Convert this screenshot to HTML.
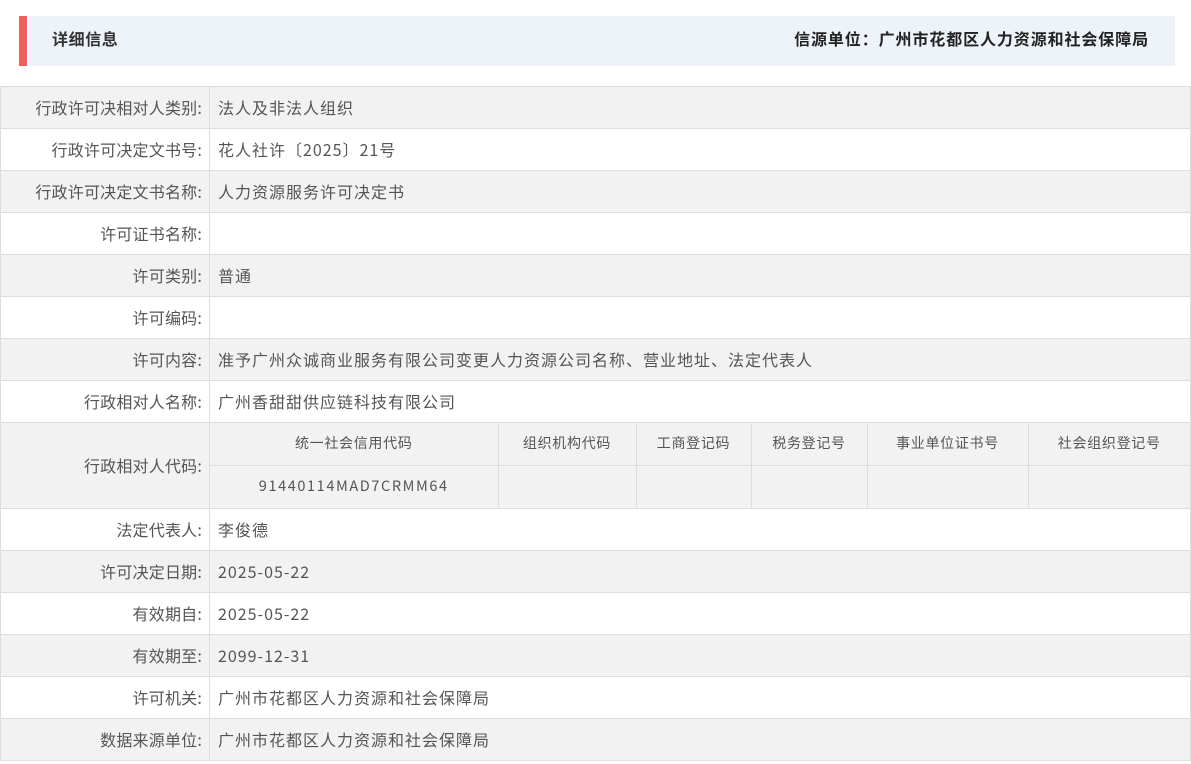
<!DOCTYPE html>
<html><head><meta charset="utf-8"><style>
*{margin:0;padding:0;box-sizing:border-box}
body{width:1191px;height:764px;background:#fff;font-family:"Liberation Sans","Noto Sans CJK SC",sans-serif;color:#333;overflow:hidden;position:relative}
.hd{position:absolute;left:19px;top:16px;width:1156px;height:50px;background:#eef2f9;border-left:8px solid #f55e5e}
.hd .t{position:absolute;left:25px;top:0;line-height:50px;font-size:16px;font-weight:bold;color:#333;letter-spacing:0.6px}
.hd .s{position:absolute;right:26px;top:0;line-height:50px;font-size:16px;font-weight:bold;color:#222;letter-spacing:0.9px}
table.m{position:absolute;left:0;top:86px;width:1191px;border-collapse:collapse;font-size:16px;letter-spacing:1px;font-family:"Noto Sans CJK SC",sans-serif}
table.m td{border:1px solid #ddd;height:42px;padding:0 8px 2px;color:#555;line-height:20px}
table.m td.l{width:209px;text-align:right;padding-right:7px;letter-spacing:0.2px}
table.m tr:nth-child(odd) td{background:#f2f2f2}
table.m td.n{padding:0}
table.i{width:100%;border-collapse:collapse;font-size:14px;letter-spacing:0.7px}
table.i td{border:1px solid #ddd;height:42px;text-align:center;background:#f2f2f2;padding:0 0 2px;color:#555}
table.i tr td:first-child{border-left:none}
table.i tr td:last-child{border-right:none}
table.i tr:first-child td{border-top:none}
table.i tr:last-child td{border-bottom:none}
.d{letter-spacing:1px}
</style></head><body>
<div class="hd"><div class="t">详细信息</div><div class="s">信源单位：广州市花都区人力资源和社会保障局</div></div>
<table class="m">
<tr><td class="l">行政许可决相对人类别:</td><td>法人及非法人组织</td></tr>
<tr><td class="l">行政许可决定文书号:</td><td>花人社许〔2025〕21号</td></tr>
<tr><td class="l">行政许可决定文书名称:</td><td>人力资源服务许可决定书</td></tr>
<tr><td class="l">许可证书名称:</td><td></td></tr>
<tr><td class="l">许可类别:</td><td>普通</td></tr>
<tr><td class="l">许可编码:</td><td></td></tr>
<tr><td class="l">许可内容:</td><td>准予广州众诚商业服务有限公司变更人力资源公司名称、营业地址、法定代表人</td></tr>
<tr><td class="l">行政相对人名称:</td><td>广州香甜甜供应链科技有限公司</td></tr>
<tr><td class="l" style="height:86px">行政相对人代码:</td><td class="n">
<table class="i"><tr><td style="width:288px">统一社会信用代码</td><td style="width:138px">组织机构代码</td><td style="width:115px">工商登记码</td><td style="width:116px">税务登记号</td><td style="width:161px">事业单位证书号</td><td>社会组织登记号</td></tr>
<tr><td style="font-size:14.5px;letter-spacing:1.6px">91440114MAD7CRMM64</td><td></td><td></td><td></td><td></td><td></td></tr></table>
</td></tr>
<tr><td class="l">法定代表人:</td><td>李俊德</td></tr>
<tr><td class="l">许可决定日期:</td><td class="d">2025-05-22</td></tr>
<tr><td class="l">有效期自:</td><td class="d">2025-05-22</td></tr>
<tr><td class="l">有效期至:</td><td class="d">2099-12-31</td></tr>
<tr><td class="l">许可机关:</td><td>广州市花都区人力资源和社会保障局</td></tr>
<tr><td class="l">数据来源单位:</td><td>广州市花都区人力资源和社会保障局</td></tr>
</table>
</body></html>
